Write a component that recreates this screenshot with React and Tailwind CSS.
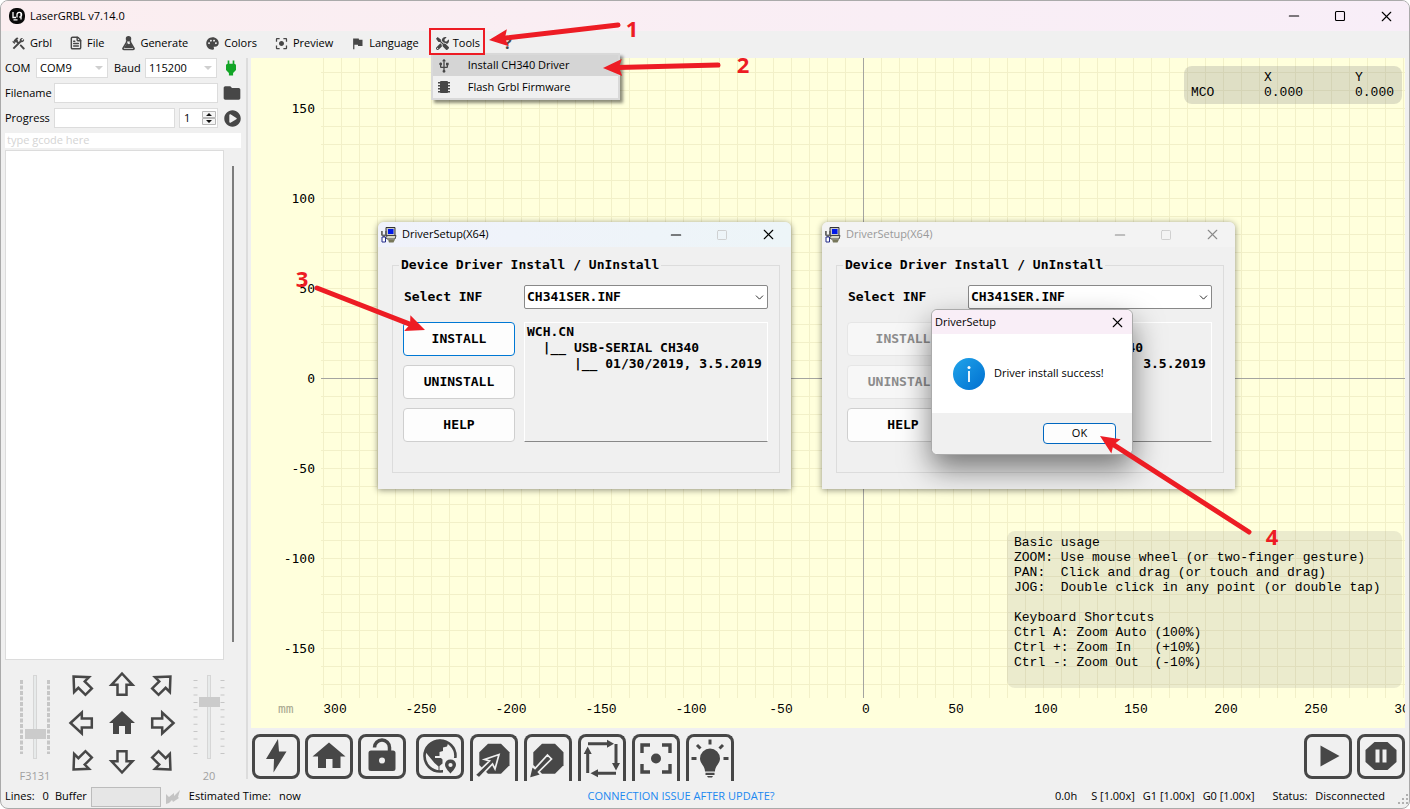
import { useState } from "react";
import { MdCenterFocusStrong, MdFlag, MdFolder, MdPalette, MdPower, MdUsb } from "react-icons/md";
import { FaPlayCircle, FaTools } from "react-icons/fa";
import { ChevronDown, FileText, Minus, Square, X } from "lucide-react";

const STEP = 18;
const X_LINES = Array.from({ length: 61 }, (_, i) => i - 30);
const Y_LINES = Array.from({ length: 35 }, (_, i) => i - 17);
const X_LABELS = [-250, -200, -150, -100, -50, 0, 50, 100, 150, 200, 250, 300];
const Y_LABELS = [150, 100, 50, 0, -50, -100, -150];

const HELP_TEXT = `Basic usage
ZOOM: Use mouse wheel (or two-finger gesture)
PAN:  Click and drag (or touch and drag)
JOG:  Double click in any point (or double tap)

Keyboard Shortcuts
Ctrl A: Zoom Auto (100%)
Ctrl +: Zoom In   (+10%)
Ctrl -: Zoom Out  (-10%)`;

const DRIVER_TEXT = `WCH.CN
  |__ USB-SERIAL CH340
      |__ 01/30/2019, 3.5.2019`;

const AppLogo = () => (
  <svg viewBox="0 0 16 16" className="size-4">
    <rect width="16" height="16" rx="7" fill="#0a0a0a" />
    <path d="M4 4v5.500h3M8 9.500V6.500a2.300 2.300 0 1 1 2.300 2.500M12 5v6.500M4.500 11.800h4" fill="none" stroke="#fff" strokeWidth="1.300" />
  </svg>
);

const HammerWrench = () => (
  <svg viewBox="0 0 24 24" className="size-[15px]" fill="currentColor">
    <path d="M13.8 15.2l2-2 6 5.9c.4.4.4 1 0 1.4l-.9.9c-.4.4-1 .4-1.4 0zM17.5 10c1.9 0 3.5-1.6 3.5-3.5 0-.6-.2-1.1-.4-1.6l-2.700 2.700-1.500-1.500 2.700-2.700C18.600 3.200 18.100 3 17.500 3 15.600 3 14 4.600 14 6.500c0 .4.1.8.2 1.200l-1.900 1.800-1.700-1.700.7-.7-1.400-1.500L12 3.500a3 3 0 0 0-4.300 0L4.200 7l1.400 1.500H2.700L2 9.200l3.500 3.500.7-.7V9.200l1.500 1.400.7-.7 1.700 1.800-7.400 7.400 2.200 2.200L16.300 9.800c.4.100.8.200 1.200.2z" />
  </svg>
);

const Flask = () => (
  <svg viewBox="0 0 24 24" className="size-[15px]" fill="none" stroke="currentColor" strokeWidth="2.400">
    <path d="M9 7v3L3 20q0 1.500 1.500 1.500h15Q21 21.500 21 20l-6-10V7" />
    <circle cx="12" cy="4.500" r="3.200" fill="currentColor" />
    <path d="M7 18l3-5 3 2 2-2 2.500 5z" fill="currentColor" />
  </svg>
);

const Chip = () => (
  <svg viewBox="0 0 14 14" className="size-[14px]" fill="currentColor">
    <rect x="3" y="1" width="8" height="12" rx="1" />
    <path d="M1 2h12v1.500H1zM1 5h12v1.500H1zM1 8h12v1.500H1zM1 11h12v1.500H1z" />
  </svg>
);

const MENUS = [
  { label: "Grbl", icon: <HammerWrench /> },
  { label: "File", icon: <FileText size={14} strokeWidth={2.5} /> },
  { label: "Generate", icon: <Flask /> },
  { label: "Colors", icon: <MdPalette size={15} /> },
  { label: "Preview", icon: <MdCenterFocusStrong size={15} /> },
  { label: "Language", icon: <MdFlag size={15} /> },
];

const MenuBar = () => (
  <nav className="flex h-[27px] items-start gap-[17px] pl-[10px]">
    {MENUS.map((menu) => (
      <button key={menu.label} className="flex h-6 items-center gap-1">
        <span className="text-[#474747]">{menu.icon}</span>
        {menu.label}
      </button>
    ))}
    <div className="relative">
      <button className="flex h-6 items-center gap-1">
        <FaTools size={13} className="text-[#474747]" />
        Tools
      </button>
      <div className="absolute top-[22px] -left-[5px] z-20 w-[189px] border-2 border-[#d9d9d9] bg-[#f0f0f0] shadow-[3px_3px_3px_rgba(0,0,0,0.45)]">
        <button className="flex h-[21px] w-full items-center gap-4 bg-[#d5d5d5] pl-[3px]">
          <MdUsb size={16} className="text-[#474747]" />
          Install CH340 Driver
        </button>
        <button className="flex h-[22px] w-full items-center gap-[17px] pl-1">
          <span className="text-[#474747]"><Chip /></span>
          Flash Grbl Firmware
        </button>
      </div>
    </div>
    <button className="h-6 pl-[7px] text-base leading-6 font-bold text-[#474747]">?</button>
  </nav>
);

const WindowButtons = ({ dim, fixed }) => (
  <div className={dim ? "flex text-[#8a8a8a]" : "flex text-black"}>
    <button aria-label="Minimize" className="flex w-[46px] items-center justify-center"><Minus size={16} strokeWidth={1.7} /></button>
    <button aria-label="Maximize" className="flex w-[46px] items-center justify-center"><Square size={12} strokeWidth={fixed ? 1.5 : 2.2} className={fixed ? "text-[#c4c4c4]" : ""} /></button>
    <button aria-label="Close" className="flex w-[46px] items-center justify-center"><X size={17} strokeWidth={1.6} /></button>
  </div>
);

const PortSelect = ({ id, value }) => (
  <div className="relative w-[72px]">
    <select id={id} defaultValue={value} className="h-5 w-full appearance-none border border-[#dcdcdc] bg-white pl-[3px]">
      <option>{value}</option>
    </select>
    <svg viewBox="0 0 8 4" className="pointer-events-none absolute top-2 right-[5px] w-2" fill="#cfcfcf"><path d="M0 0h8L4 4z" /></svg>
  </div>
);

const JOG_ARROWS = [
  { name: "Up left", angle: -45 },
  { name: "Up", angle: 0 },
  { name: "Up right", angle: 45 },
  { name: "Left", angle: -90 },
  { name: "Home" },
  { name: "Right", angle: 90 },
  { name: "Down left", angle: -135 },
  { name: "Down", angle: 180 },
  { name: "Down right", angle: 135 },
];

const JogPad = () => (
  <div className="grid grid-cols-3 grid-rows-3">
    {JOG_ARROWS.map(({ name, angle }) => (
      <button key={name} aria-label={name} className="flex h-[39px] w-[41px] items-center justify-center">
        <svg viewBox="-14 -14 28 28" className="size-7">
          {name === "Home" ? (
            <path d="M0-12 13 0H9V11H3V3H-3V11H-9V0H-13Z" fill="#474747" />
          ) : (
            <path d="M0-10.500 10.500.8H4.500V10.800H-4.500V.8H-10.500Z" fill="none" stroke="#474747" strokeWidth="2.500" transform={`rotate(${angle})`} />
          )}
        </svg>
      </button>
    ))}
  </div>
);

const JogSlider = ({ id, label, value, max, dense }) => (
  <div className="flex w-[60px] flex-col items-center gap-2 pt-[11px] text-[#a0a0a0]">
    <div className="relative flex h-[85px] w-8 justify-center">
      <svg viewBox="0 0 32 85" className="absolute inset-0" fill="none" stroke="#c6c6c6" aria-hidden="true">
        <rect x="14.500" y="0.500" width="3" height="83" fill="#e7eaea" stroke="#d6d6d6" />
        {dense ? (
          <path d="M2.500 5v74M29.500 5v74" strokeWidth="3" strokeDasharray="4 1.500" />
        ) : (
          <path d="M2.500 5v74M29.500 5v74" strokeWidth="4" strokeDasharray="1 6.300" />
        )}
      </svg>
      <input
        id={id}
        type="range"
        min="0"
        max={max}
        defaultValue={value}
        className="relative h-[85px] w-[21px] appearance-none bg-transparent [direction:rtl] [writing-mode:vertical-lr] [&::-webkit-slider-thumb]:h-[10px] [&::-webkit-slider-thumb]:w-[21px] [&::-webkit-slider-thumb]:appearance-none [&::-webkit-slider-thumb]:bg-[#cbcbcb]"
      />
    </div>
    <label htmlFor={id}>{label}</label>
  </div>
);

const LeftPanel = () => (
  <aside className="flex w-[245px] shrink-0 flex-col pl-[4px]">
    <div className="flex flex-col gap-[5px]">
      <div className="flex h-5 items-center gap-[6px]">
        <label htmlFor="com" className="w-[25px]">COM</label>
        <PortSelect id="com" value="COM9" />
        <label htmlFor="baud" className="w-[25px]">Baud</label>
        <PortSelect id="baud" value="115200" />
        <button aria-label="Connect" className="-ml-0.5 text-[#12a526]"><MdPower size={20} /></button>
      </div>
      <div className="flex h-5 items-center">
        <label htmlFor="filename" className="w-[49px]">Filename</label>
        <input id="filename" className="h-5 w-[164px] border border-[#dcdcdc] bg-white" />
        <button aria-label="Open file" className="ml-1 text-[#474747]"><MdFolder size={20} /></button>
      </div>
      <div className="flex h-5 items-center">
        <label htmlFor="progress" className="w-[49px]">Progress</label>
        <input id="progress" readOnly className="h-5 w-[121px] border border-[#dcdcdc] bg-white" />
        <div className="ml-1 flex h-5 w-[39px] border border-[#dcdcdc] bg-white">
          <input aria-label="Passes" defaultValue="1" className="w-[22px] pl-1" />
          <svg viewBox="0 0 14 18" className="h-[18px] w-[14px]">
            <path d="M.5 2.500h13v6H.5zM.5 9.500h13v6H.5z" fill="#f5f5f5" stroke="#b8b8b8" />
            <path d="M4 7l3-3 3 3zM4 11l3 3 3-3z" fill="#111" />
          </svg>
        </div>
        <button aria-label="Run program" className="ml-[6px] text-[#474747]"><FaPlayCircle size={17} /></button>
      </div>
      <input aria-label="G-code" placeholder="type gcode here" className="h-[15px] w-[236px] bg-white pl-0.5 placeholder:text-[#d4d4d4]" />
    </div>
    <div className="flex flex-1 pt-0.5">
      <textarea aria-label="Console" className="w-[219px] resize-none border border-[#dcdcdc] bg-white" />
      <div className="mt-4 mb-[18px] ml-2 w-0.5 bg-[#7d7d7d]" />
    </div>
    <div className="flex h-[125px] pt-1">
      <JogSlider id="speed" label="F3131" value={28} max={100} dense />
      <div className="-ml-[5px]"><JogPad /></div>
      <div className="-ml-1"><JogSlider id="step" label="20" value={71} max={100} /></div>
    </div>
  </aside>
);

const DriverIcon = () => (
  <svg viewBox="0 0 16 16" className="size-4">
    <path d="M5 .5h9v8H5z" fill="#c9c9c9" stroke="#333" />
    <path d="M7 2h5.500v5H7z" fill="#0018e8" />
    <path d="M5 10.500 6.500 8.500H15l-1 3.500H6z" fill="#d8d8c8" stroke="#444" />
    <path d="M.8 4v3.500l2.200 1.500v2M5 4v3.500L3 9" fill="none" stroke="#666" strokeWidth="2" />
    <path d="M1 10h3.500v5H1z" fill="#fff" stroke="#222a88" />
    <path d="M7 12.500h7L12.500 15.500H8z" fill="#77775a" />
  </svg>
);

const DriverDialog = ({ id, installed, children, className }) => {
  const button = "h-[34px] rounded border bg-[#fdfdfd] disabled:border-[#e6e6e6] disabled:bg-[#f7f7f7] disabled:text-[#8c8c8c]";
  return (
    <section className={`absolute w-[413px] rounded-t-md bg-[#f0f0f0] shadow-[0_1px_6px_rgba(0,0,0,0.45)] ${className}`}>
      <header className={installed ? "flex h-[25px] rounded-t-md bg-[#f3f3f3] text-[#999]" : "flex h-[25px] rounded-t-md bg-linear-to-r from-[#f0f2fb] to-[#edf5f8]"}>
        <div className="flex flex-1 items-center gap-[5px] pl-[3px]">
          <DriverIcon />
          DriverSetup(X64)
        </div>
        <WindowButtons dim={installed} fixed />
      </header>
      <div className="pt-[10px] pr-[11px] pb-4 pl-[14px] font-['DejaVu_Sans_Mono',monospace] text-[13px] leading-4 font-bold">
        <fieldset className="border border-[#dcdcdc] pt-3 pr-[11px] pb-[30px] pl-[10px]">
          <legend className="-ml-1 px-0.5">Device Driver Install / UnInstall</legend>
          <div className="grid grid-cols-[112px_1fr] gap-x-[9px] gap-y-[13px]">
            <label htmlFor={id} className="flex items-center pl-px">Select INF</label>
            <div className="relative">
              <select id={id} defaultValue="CH341SER.INF" className="h-6 w-full appearance-none rounded-xs border border-[#888] bg-white px-0.5">
                <option>CH341SER.INF</option>
              </select>
              <ChevronDown size={13} strokeWidth={1.5} className="pointer-events-none absolute top-[6px] right-0.5" />
            </div>
            <div className="flex flex-col gap-[9px]">
              <button disabled={installed} className={`${button} border-[#0078d4]`}>INSTALL</button>
              <button disabled={installed} className={`${button} border-[#cfcfcf]`}>UNINSTALL</button>
              <button className={`${button} border-[#cfcfcf]`}>HELP</button>
            </div>
            <pre className="overflow-hidden border border-t-white border-r-white border-b-[#888] border-l-white px-0.5 py-px font-['DejaVu_Sans_Mono',monospace]">{DRIVER_TEXT}</pre>
          </div>
        </fieldset>
      </div>
      {children}
    </section>
  );
};

const MessageBox = ({ onClose }) => (
  <div role="dialog" aria-label="DriverSetup" className="absolute top-[87px] left-[109px] w-[202px] rounded-md border border-[#aaa] bg-white shadow-[0_14px_30px_rgba(0,0,0,0.5)]">
    <header className="flex h-6 items-center rounded-t-md bg-[#f9eef7] pl-[3px]">
      <span className="flex-1">DriverSetup</span>
      <button onClick={onClose} aria-label="Close" className="flex w-[30px] items-center justify-center"><X size={17} strokeWidth={1.6} /></button>
    </header>
    <div className="flex h-[79px] items-center gap-[9px] pl-[21px]">
      <svg viewBox="0 0 32 32" className="size-8">
        <defs>
          <linearGradient id="info" x1="0" y1="0" x2="1" y2="1">
            <stop offset="0" stopColor="#20a4ea" />
            <stop offset="1" stopColor="#006fd0" />
          </linearGradient>
        </defs>
        <circle cx="16" cy="16" r="16" fill="url(#info)" />
        <path d="M16 13v11" stroke="#fff" strokeWidth="1.800" />
        <circle cx="16" cy="9.500" r="1.500" fill="#fff" />
      </svg>
      Driver install success!
    </div>
    <footer className="flex h-[41px] items-center justify-end rounded-b-md bg-[#f0f0f0] pr-4">
      <button onClick={onClose} className="h-[21px] w-[73px] rounded border border-[#0067c0] bg-[#fdfdfd]">OK</button>
    </footer>
  </div>
);

// Work area preview: grid, axes and their labels all hang off the centre of the plot.
const Plot = () => (
  <div className="h-full pb-[30px] pl-[70px]">
    <svg className="block h-full w-full overflow-visible font-['DejaVu_Sans_Mono',monospace] text-[13px]">
      <svg x="50%" overflow="visible" height="100%" shapeRendering="crispEdges">
        {X_LINES.map((i) => (
          <line key={i} x1={i * STEP} x2={i * STEP} y1="0" y2="100%" stroke="#f2f0c8" />
        ))}
      </svg>
      <svg y="50%" overflow="visible" width="100%" shapeRendering="crispEdges">
        {Y_LINES.map((i) => (
          <line key={i} x1="0" x2="100%" y1={i * STEP} y2={i * STEP} stroke="#f2f0c8" />
        ))}
      </svg>
      <line x1="50%" x2="50%" y1="0" y2="100%" stroke="#a4a4a0" shapeRendering="crispEdges" />
      <line x1="0" x2="100%" y1="50%" y2="50%" stroke="#a4a4a0" shapeRendering="crispEdges" />
      <svg y="50%" overflow="visible">
        {Y_LABELS.map((v) => (
          <text key={v} x="-6" y={(-v * 9) / 5 + 5} textAnchor="end">{v}</text>
        ))}
      </svg>
      <svg x="50%" y="100%" overflow="visible" className="font-['Liberation_Mono',monospace]">
        {X_LABELS.map((v) => (
          <text key={v} x={(v * 9) / 5 + (v < 0 ? 8 : 3)} y="15" textAnchor="middle">{v}</text>
        ))}
        <text x="-528" y="15" textAnchor="middle">300</text>
      </svg>
      <text x="-43" y="100%" dy="15" fill="#a8a890">mm</text>
    </svg>
  </div>
);

const ICONS = {
  flash: <path d="M26 5 14 25h8l-.5 13.500L34.500 17.500H27z" />,
  home: <path d="M24 8.500 40.500 22.500H35.500V34H27.500V25H21V34H13V22.500H7.500Z" />,
  unlock: (
    <>
      <path d="M16.500 13.500a7.500 7.500 0 0 1 15 0V18" fill="none" stroke="currentColor" strokeWidth="3.500" />
      <path fillRule="evenodd" d="M13 16.500h22a2.500 2.500 0 0 1 2.500 2.500v15.500a2.500 2.500 0 0 1-2.500 2.500H13a2.500 2.500 0 0 1-2.500-2.500V19a2.500 2.500 0 0 1 2.500-2.500zM24 23.500a3 3 0 1 0 0 6 3 3 0 0 0 0-6z" />
    </>
  ),
  globe: (
    <>
      <circle cx="24" cy="22" r="15.500" fill="none" stroke="currentColor" strokeWidth="2.600" />
      <path d="M9 17.500 12 12l6-5 6-1.500 6 1.500 2 2.500-1 3-4 1v3.500l-3.500 1V22h-4.500v2h6l1.500 1.500v4l-3 2.500v5.500l-1-.5v-4.500l-4-3.500z" />
      <path d="M27 24h15v16H27z" fill="#f0f0f0" />
      <path fillRule="evenodd" d="M34.500 25.500c-3.500 0-5.500 2.500-5.500 5.300 0 3.500 5.500 8.700 5.500 8.700s5.500-5.200 5.500-8.700c0-2.800-2-5.300-5.500-5.300zm0 3.400a2.100 2.100 0 1 1 0 4.200 2.100 2.100 0 0 1 0-4.200z" />
    </>
  ),
  arrowIn: (
    <>
      <path d="M18 9.700h13l8.500 8.500v13L31 39.700H18L9.300 31V18.200z" />
      <path d="M5 41 19.500 27 14.500 25.500 29 20.500 25 35 22.500 30 9 44z" stroke="#f0f0f0" strokeWidth="1.700" />
    </>
  ),
  arrowOut: (
    <>
      <path d="M18 9.700h13l8.500 8.500v13L31 39.700H18L9.300 31V18.200z" />
      <path d="M23.500 21 27.500 25 14.500 38 17 41 5 44.500 8 32 11 34.500z" stroke="#f0f0f0" strokeWidth="1.700" />
    </>
  ),
  frame: (
    <>
      <path d="M10 9.700h20M38 10v20M38 39.300H18M9.700 39V19" stroke="currentColor" strokeWidth="3" />
      <path d="M29 5.700 36 9.700 29 13.700zM34 29l4 7.500 4-7.500zM20 35.300l-7.500 4 7.500 4zM5.700 20l4-7.500 4 7.500z" />
    </>
  ),
  focus: (
    <>
      <path d="M10 19v-8h8M30 11h8v8M38 30v8h-8M18 38h-8v-8" fill="none" stroke="currentColor" strokeWidth="3.400" />
      <circle cx="24" cy="24.500" r="5" />
    </>
  ),
  bulb: (
    <>
      <path d="M24 14.500a10 10 0 0 0-10 10c0 5 5 7.500 5 13h10c0-5.500 5-8 5-13a10 10 0 0 0-10-10zM19.500 38.800h9v2.200h-9zM21 42h6l-1 1.500h-4z" />
      <path d="M24 5.500v5M11 11l3.500 3.500M37 11l-3.500 3.500M5.500 24.500h5M37.500 24.500h5" stroke="currentColor" strokeWidth="3" />
    </>
  ),
  play: <path d="M16.500 11.500 35.500 22 16.500 32.500z" />,
  pause: <path fillRule="evenodd" d="M17.500 8h13L39.500 16v12L30.500 36h-13L8.500 28V16zM18.500 15.500v13h4v-13zM25.500 15.500v13h4v-13z" />,
};

const ToolButton = ({ name, tall }) => (
  <button
    aria-label={name}
    className={
      tall
        ? "h-[47px] w-12 rounded-t-lg border-3 border-b-0 border-[#474747] text-[#474747]"
        : "h-[45px] w-12 rounded-lg border-3 border-[#474747] text-[#474747]"
    }
  >
    <svg viewBox={tall ? "3 3 42 44" : "3 3 42 39"} className="block h-full w-full" fill="currentColor">
      {ICONS[name]}
    </svg>
  </button>
);

const Toolbar = () => (
  <div className="flex h-[57px] items-start pt-[6px] pl-px">
    <div className="flex gap-[5px]">
      <ToolButton name="flash" />
      <ToolButton name="home" />
      <ToolButton name="unlock" />
    </div>
    <div className="ml-[10px] flex flex-1 gap-[6px]">
      <ToolButton name="globe" />
      <ToolButton name="arrowIn" tall />
      <ToolButton name="arrowOut" tall />
      <ToolButton name="frame" tall />
      <ToolButton name="focus" tall />
      <ToolButton name="bulb" tall />
    </div>
    <div className="flex gap-[5px]">
      <ToolButton name="play" />
      <ToolButton name="pause" />
    </div>
  </div>
);

const StatusBar = () => (
  <footer className="flex h-[23px] items-center pl-[4px]">
    <div className="flex flex-1 items-center">
      <span>Lines:</span>
      <span className="ml-2">0</span>
      <span className="ml-[6px]">Buffer</span>
      <div className="ml-1 h-5 w-[70px] border border-[#bcbcbc] bg-[#e6e6e6]" />
      <svg viewBox="0 0 16 16" className="mx-1 size-4" fill="#c4c4c4"><path d="M1 15V5l3 3 5-4v3l6-6-2 7 1 1-6 4-1-2-3 3z" /></svg>
      <span className="ml-1">Estimated Time:</span>
      <span className="ml-2">now</span>
    </div>
    <a href="#connection-issue" className="mr-13 text-[#2088f0]">CONNECTION ISSUE AFTER UPDATE?</a>
    <div className="flex flex-1 items-center justify-end">
      <span>0.0h</span>
      <span className="ml-[14px]">S [1.00x]</span>
      <span className="ml-2">G1 [1.00x]</span>
      <span className="ml-2">G0 [1.00x]</span>
      <span className="ml-[18px]">Status:</span>
      <span className="ml-2">Disconnected</span>
      <svg viewBox="0 0 12 12" className="ml-3 size-3 self-end" fill="#b0b0b0">
        <path d="M9 1h2v2H9zM9 5h2v2H9zM5 5h2v2H5zM9 9h2v2H9zM5 9h2v2H5zM1 9h2v2H1z" />
      </svg>
    </div>
  </footer>
);

const STEPS = [
  { n: 1, from: [618, 25], to: [489, 40], at: [632, 37] },
  { n: 2, from: [718, 65], to: [603, 68], at: [743, 73] },
  { n: 3, from: [317, 288], to: [425, 330], at: [302, 287] },
  { n: 4, from: [1249, 532], to: [1100, 436], at: [1272, 545] },
];

const StepMarks = () => (
  <svg className="pointer-events-none absolute -top-px -left-px z-30 h-full w-full font-['Open_Sans',sans-serif] text-[22px] font-bold" fill="#ed1c24">
    <rect x="430" y="29" width="54" height="25" fill="none" stroke="#ed1c24" strokeWidth="2" />
    {STEPS.map(({ n, from, to, at }) => {
      const dx = from[0] - to[0];
      const dy = from[1] - to[1];
      const angle = (Math.atan2(dy, dx) * 180) / Math.PI;
      return (
        <g key={n}>
          <text x={at[0]} y={at[1]} textAnchor="middle">{n}</text>
          <g transform={`translate(${to[0]} ${to[1]}) rotate(${angle})`}>
            <path d="M0 0 19-8.500 16 0 19 8.500z" />
            <line x1="15" x2={Math.hypot(dx, dy)} y1="0" y2="0" stroke="#ed1c24" strokeWidth="5" strokeLinecap="round" />
          </g>
        </g>
      );
    })}
  </svg>
);

const App = () => {
  const [showMessage, setShowMessage] = useState(true);

  return (
    <div className="relative flex h-screen flex-col overflow-hidden rounded-lg border border-[#aaa] bg-[#f0f0f0] font-['Open_Sans',sans-serif] text-[11px] text-black">
      <header className="flex h-[30px] shrink-0 bg-linear-to-r from-[#fbeef0] to-[#f8eef8]">
        <div className="flex flex-1 items-center gap-[5px] pl-2">
          <AppLogo />
          LaserGRBL v7.14.0
        </div>
        <WindowButtons />
      </header>
      <MenuBar />
      <main className="flex min-h-0 flex-1">
        <LeftPanel />
        <div className="mb-[6px] w-0.5 shrink-0 bg-[#dcdcdc]" />
        <div className="ml-[3px] flex min-w-0 flex-1 flex-col pr-1">
          <div className="relative min-h-0 flex-1 overflow-hidden bg-[#ffffdc]">
            <Plot />
            <table className="absolute top-2 right-[3px] rounded-lg bg-[#80808040] font-['Liberation_Mono',monospace] text-[13px] leading-[15px]">
              <thead>
                <tr className="text-left">
                  <td className="w-20 pt-1" />
                  <th className="w-[91px] pt-1 font-normal">X</th>
                  <th className="w-[47px] pt-1 font-normal">Y</th>
                </tr>
              </thead>
              <tbody>
                <tr>
                  <th className="pb-1 pl-[7px] text-left font-normal">MCO</th>
                  <td className="pb-1">0.000</td>
                  <td className="pb-1">0.000</td>
                </tr>
              </tbody>
            </table>
            <pre className="absolute right-[3px] bottom-10 w-[395px] rounded-lg bg-[#80808028] px-[7px] pt-1 pb-[18px] font-['Liberation_Mono',monospace] text-[13px] leading-[15px]">{HELP_TEXT}</pre>
            <DriverDialog id="inf" className="top-[164px] left-[127px]" />
            <DriverDialog id="inf-installed" installed className="top-[164px] left-[571px]">
              {showMessage && <MessageBox onClose={() => setShowMessage(false)} />}
            </DriverDialog>
          </div>
          <Toolbar />
        </div>
      </main>
      <StatusBar />
      <StepMarks />
    </div>
  );
};

export default App;
